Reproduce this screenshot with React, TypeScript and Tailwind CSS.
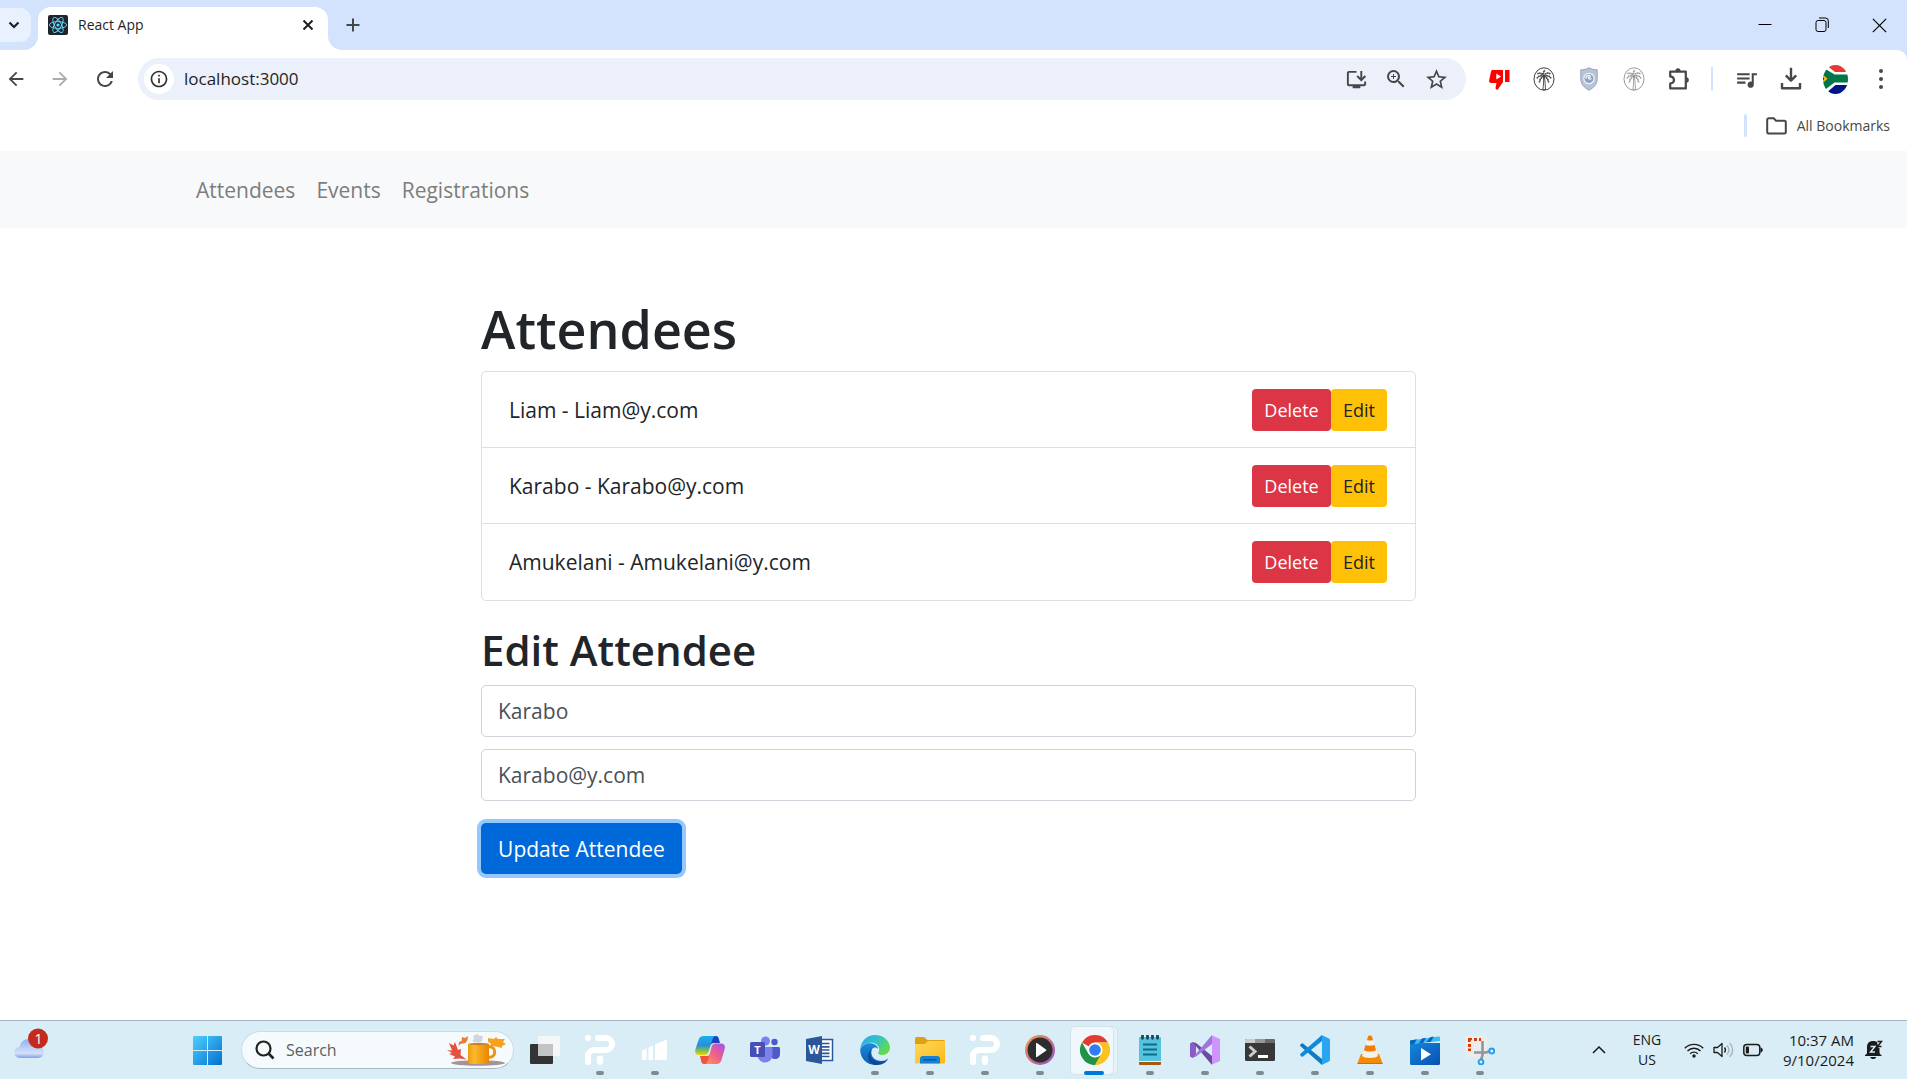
import React, { useState } from 'react';
import {
  MdArrowBack,
  MdArrowForward,
  MdRefresh,
  MdInfoOutline,
  MdOutlineInstallDesktop,
  MdZoomIn,
  MdStarBorder,
  MdQueueMusic,
} from 'react-icons/md';

type SvgProps = { children: React.ReactNode; box?: string; className?: string };

function Svg({ children, box = '0 0 30 30', className = 'size-[30px]' }: SvgProps) {
  return (
    <svg viewBox={box} className={className} fill="none" aria-hidden="true">
      {children}
    </svg>
  );
}

/* ---------- browser chrome ---------- */

function ReactFavicon() {
  return (
    <Svg box="0 0 20 20" className="size-[20px]">
      <rect width="20" height="20" rx="2" fill="#20232a" />
      <g stroke="#61dafb" strokeWidth="0.9">
        <ellipse cx="10" cy="10" rx="8.6" ry="3.4" />
        <ellipse cx="10" cy="10" rx="8.6" ry="3.4" transform="rotate(60 10 10)" />
        <ellipse cx="10" cy="10" rx="8.6" ry="3.4" transform="rotate(120 10 10)" />
      </g>
      <circle cx="10" cy="10" r="1.6" fill="#61dafb" />
    </Svg>
  );
}

function TabStrip() {
  return (
    <div className="flex h-[50px] items-end bg-[#d3e3fd]">
      <button
        aria-label="Search tabs"
        className="mb-2 flex h-[34px] w-[31px] items-center rounded-r-[11px] bg-[#e9f0fe] pl-2"
      >
        <Svg box="0 0 12 12" className="size-3">
          <path d="M1.5 3.5 6 8l4.500-4.500" stroke="#1f1f1f" strokeWidth="2.200" />
        </Svg>
      </button>
      <div className="relative ml-[7px] flex h-[43px] w-[290px] items-center rounded-t-[13px] bg-white pr-3 pl-[10px]">
        <Svg box="0 0 14 14" className="absolute bottom-0 -left-[14px] size-[14px]">
          <path d="M14 0v14H0A14 14 0 0 0 14 0Z" fill="#fff" />
        </Svg>
        <Svg box="0 0 14 14" className="absolute -right-[14px] bottom-0 size-[14px]">
          <path d="M0 0v14h14A14 14 0 0 1 0 0Z" fill="#fff" />
        </Svg>
        <div className="mb-[7px] flex flex-1 items-center">
          <ReactFavicon />
          <span className="ml-[10px] flex-1 text-[14px] leading-5 text-[#1f1f1f]">React App</span>
          <button aria-label="Close tab" className="flex size-4 items-center justify-center">
            <Svg box="0 0 12 12" className="size-3">
              <path d="m1.500 1.500 9 9m0-9-9 9" stroke="#1f1f1f" strokeWidth="2" />
            </Svg>
          </button>
        </div>
      </div>
      <button aria-label="New tab" className="mb-[17px] ml-[17px] flex size-4 items-center justify-center">
        <Svg box="0 0 14 14" className="size-[14px]">
          <path d="M7 .5v13M.5 7h13" stroke="#474747" strokeWidth="2" />
        </Svg>
      </button>
      <div className="mb-[17px] ml-auto flex items-center gap-[43px] pr-5">
        <button aria-label="Minimize">
          <Svg box="0 0 14 14" className="size-[14px]">
            <path d="M.5 6.500h13" stroke="#000" />
          </Svg>
        </button>
        <button aria-label="Restore">
          <Svg box="0 0 14 16" className="h-4 w-[14px]">
            <rect x="1" y="3.500" width="10" height="11" rx="2" stroke="#000" />
            <path d="M4 1h6.500A2.800 2.800 0 0 1 13.300 3.800V11" stroke="#000" />
          </Svg>
        </button>
        <button aria-label="Close">
          <Svg box="0 0 14 14" className="size-[15px]">
            <path d="m.8.8 12.400 12.400m0-12.400L.8 13.200" stroke="#000" strokeWidth="1.100" />
          </Svg>
        </button>
      </div>
    </div>
  );
}

function DislikeIcon() {
  return (
    <Svg box="0 0 21 21" className="size-[21px]">
      <path d="M3.500 1H14v12l-5.200 7.500c-1.200.6-2.600-.5-2.200-2L7.500 14H2C.8 14-.2 12.800.1 11.600L2 2.500C2.200 1.600 2.800 1 3.500 1Z" fill="#f00" />
      <rect x="16" y="1" width="4.500" height="12" fill="#f00" />
      <path d="M7.300 4.600v6L12 7.600Z" fill="#fff" />
    </Svg>
  );
}

function PalmIcon({ color }: { color: string }) {
  return (
    <Svg box="0 0 22 24" className="h-6 w-[22px]">
      <g stroke={color}>
        <ellipse cx="11" cy="12" rx="10" ry="11.200" strokeWidth="1" />
        <path d="M10.500 10c.3 4 0 8-.6 12.500h2.600c-.2-4-.5-8.500-1-12.500" strokeWidth=".9" />
        <path
          d="M11 9.500C9 6 6.500 5.500 4.500 7M11 9.500c-3-1.500-6-.5-7 2M11 9.500c-2.500.5-4.500 3-4.500 6M11 9.500c1.500-3.500 4-4.500 6.500-2.500M11 9.500c3-1.500 6-.5 7 2M11 9.500c2.500.5 4.500 3 4.500 6M11 9.500C10 6.500 10.500 4.500 12 3"
          strokeWidth="1.600"
          strokeDasharray="1.800 .4"
        />
      </g>
    </Svg>
  );
}

function ShieldIcon() {
  return (
    <Svg box="0 0 18 24" className="h-6 w-[18px]">
      <path d="M9 .8c2.500 1.500 5 2 8.200 2v9c0 5.500-3.500 9-8.200 11.400C4.300 20.800.8 17.300.8 11.800v-9c3.200 0 5.700-.5 8.200-2Z" fill="#b9c3d6" stroke="#98a3b8" />
      <circle cx="9" cy="11.500" r="5.200" fill="#8fa3c4" stroke="#eef2f8" strokeWidth="1.300" />
      <path d="M6 11.500c0-2 1.500-3 3-3s1.500 1.500 0 2 .5 2.500 2.500 1" stroke="#eef2f8" strokeWidth="1.500" />
    </Svg>
  );
}

function PuzzleIcon() {
  return (
    <Svg box="0 0 22 24" className="h-6 w-[22px]">
      <path
        d="M2.200 4.600h15.600v16.800H2.200v-4.800c2.400-.4 3.800-1.800 3.800-3.600s-1.400-3.200-3.800-3.600Z"
        stroke="#474747"
        strokeWidth="2.200"
        strokeLinejoin="round"
      />
      <path d="M7.500 4a2.500 2.800 0 0 1 5 0ZM18.500 10.200a2.300 2.800 0 0 1 0 5.600Z" fill="#474747" />
    </Svg>
  );
}

function FlagAvatar() {
  return (
    <Svg box="0 0 25 29" className="h-[29px] w-[25px]">
      <clipPath id="flag-clip">
        <ellipse cx="12.500" cy="14.500" rx="12.500" ry="14.500" />
      </clipPath>
      <g clipPath="url(#flag-clip)">
        <rect width="25" height="29" fill="#fff" />
        <path d="M3 0h22v7H12Z" fill="#e03c31" />
        <path d="M2 29h23v-9H12.500Z" fill="#001489" />
        <path d="M-1 2 11.500 9.500H25v8H11.500L-1 27Z" fill="#007749" />
        <path d="M-1 9 4.500 13.800-1 18.500Z" fill="#ffb81c" />
        <path d="M-1 11.500 1.300 13.800-1 16Z" fill="#000" />
      </g>
    </Svg>
  );
}

function Toolbar() {
  return (
    <div className="bg-[#d3e3fd]">
      <div className="flex h-[58px] items-center rounded-tr-[10px] bg-white pl-[5px]">
        <button aria-label="Back" className="text-[#474747]">
          <MdArrowBack size={22} />
        </button>
        <button aria-label="Forward" className="ml-[22px] text-[#ababab]">
          <MdArrowForward size={22} />
        </button>
        <button aria-label="Reload" className="ml-[22px] text-[#474747]">
          <MdRefresh size={24} />
        </button>
        <div className="ml-[21px] flex h-[42px] flex-1 items-center rounded-full bg-[#ebf0fa] px-[6px]">
          <button
            aria-label="Site information"
            className="flex size-[30px] items-center justify-center rounded-full bg-white text-[#303030]"
          >
            <MdInfoOutline size={20} />
          </button>
          <input
            aria-label="Address"
            defaultValue="localhost:3000"
            className="ml-[10px] min-w-0 flex-1 bg-transparent text-[17px] leading-6 text-[#1f1f1f] outline-none"
          />
          <div className="flex items-center gap-4 pr-[11px] text-[#474747]">
            <button aria-label="Install app">
              <MdOutlineInstallDesktop size={23} />
            </button>
            <button aria-label="Zoom">
              <MdZoomIn size={24} />
            </button>
            <button aria-label="Bookmark this tab">
              <MdStarBorder size={25} />
            </button>
          </div>
        </div>
        <div className="ml-[23px] flex items-center gap-[23px]">
          <button aria-label="Dislike counter"><DislikeIcon /></button>
          <button aria-label="Palm extension"><PalmIcon color="#3f3f3f" /></button>
          <button aria-label="Shield extension" className="mx-[2px]"><ShieldIcon /></button>
          <button aria-label="Second palm extension"><PalmIcon color="#9a9a9a" /></button>
          <button aria-label="Extensions"><PuzzleIcon /></button>
        </div>
        <div className="mr-[21px] ml-[21px] h-6 w-[2px] bg-[#d3e3fd]" />
        <div className="flex items-center gap-[21px] pr-[14px] text-[#474747]">
          <button aria-label="Media"><MdQueueMusic size={25} /></button>
          <button aria-label="Downloads">
            <Svg box="0 0 22 24" className="h-6 w-[22px]">
              <path d="M11 .8v12.500M5.800 8.400l5.200 5.200 5.200-5.200M2 16v5.200h18V16" stroke="#474747" strokeWidth="2.400" strokeLinejoin="round" />
            </Svg>
          </button>
          <button aria-label="Profile"><FlagAvatar /></button>
          <button aria-label="Menu" className="flex w-6 justify-center">
            <Svg box="0 0 6 22" className="h-[22px] w-[6px]">
              <circle cx="3" cy="3" r="2" fill="#474747" />
              <circle cx="3" cy="11" r="2" fill="#474747" />
              <circle cx="3" cy="19" r="2" fill="#474747" />
            </Svg>
          </button>
        </div>
      </div>
    </div>
  );
}

function BookmarksBar() {
  return (
    <div className="flex h-[43px] items-center justify-end bg-white pr-[17px] pb-2">
      <div className="h-[23px] w-[3px] rounded bg-[#d3e3fd]" />
      <button className="ml-[19px] flex items-center gap-[10px] text-[14px] leading-5 text-[#474747]">
        <Svg box="0 0 21 18" className="h-[18px] w-[21px]">
          <path d="M1.200 14.800V3a1.500 1.500 0 0 1 1.500-1.700h5l2.300 2.400h8.300a1.500 1.500 0 0 1 1.500 1.500v9.800a1.500 1.500 0 0 1-1.500 1.500H2.700a1.500 1.500 0 0 1-1.500-1.700Z" stroke="#474747" strokeWidth="2" />
        </Svg>
        All Bookmarks
      </button>
    </div>
  );
}

/* ---------- web page ---------- */

const attendees = [
  { name: 'Liam', email: 'Liam@y.com' },
  { name: 'Karabo', email: 'Karabo@y.com' },
  { name: 'Amukelani', email: 'Amukelani@y.com' },
];

function Page() {
  const [name, setName] = useState('Karabo');
  const [email, setEmail] = useState('Karabo@y.com');
  const field =
    'block h-[52px] w-full rounded-[5px] border border-[#ced4da] bg-white px-4 text-[21px] leading-8 text-[#495057] outline-none';
  return (
    <div className="flex-1 bg-white text-[#212529]">
      <nav className="flex h-[77px] items-center gap-[21px] bg-[#f8f9fa] pl-[196px] text-[21px] leading-8 text-[#7c7d7d]">
        <a href="#attendees">Attendees</a>
        <a href="#events">Events</a>
        <a href="#registrations">Registrations</a>
      </nav>
      <main className="pt-[68px] pr-[10px]">
        <div className="mx-auto max-w-[935px]">
          <h1 className="mb-[9px] text-[52px] leading-[66px] font-semibold">Attendees</h1>
          <ul className="divide-y divide-[#dfdfdf] rounded-[5px] border border-[#dfdfdf]">
            {attendees.map((a) => (
              <li key={a.name} className="flex h-[76px] items-center justify-between pr-7 pl-[27px]">
                <span className="text-[21px] leading-8">
                  {a.name} - {a.email}
                </span>
                <span className="flex text-[18px] leading-7">
                  <button className="h-[42px] w-[79px] rounded-[4px] bg-[#dc3545] text-white">Delete</button>
                  <button className="h-[42px] w-[56px] rounded-[4px] bg-[#ffc107]">Edit</button>
                </span>
              </li>
            ))}
          </ul>
          <h2 className="mt-[22px] mb-[9px] text-[42px] leading-[53px] font-semibold">Edit Attendee</h2>
          <form onSubmit={(e) => e.preventDefault()}>
            <input aria-label="Name" className={field} value={name} onChange={(e) => setName(e.target.value)} />
            <input
              aria-label="Email"
              className={field + ' mt-3'}
              value={email}
              onChange={(e) => setEmail(e.target.value)}
            />
            <button className="mt-[22px] block h-[51px] w-[201px] rounded-[5px] bg-[#0069d9] text-[21px] leading-8 text-white ring-4 ring-[#95c8ff]">
              Update Attendee
            </button>
          </form>
        </div>
      </main>
    </div>
  );
}

/* ---------- taskbar ---------- */

function Weather() {
  return (
    <Svg box="0 0 36 32" className="h-8 w-9">
      <defs>
        <linearGradient id="cloud" x1="0" y1="0" x2="0" y2="1">
          <stop stopColor="#8fb2ee" />
          <stop offset=".75" stopColor="#d5e0fb" />
          <stop offset="1" stopColor="#7fa0f0" />
        </linearGradient>
      </defs>
      <path d="M6 30a5.500 5.500 0 0 1-.5-11c1-5 4.500-8 9-8s8 3 8.500 7c4 0 7 2.500 7 6a6 6 0 0 1-6 6Z" fill="url(#cloud)" />
      <circle cx="24" cy="10.500" r="10" fill="#c42b1c" />
      <text x="24.500" y="15.500" fill="#fff" fontSize="14" textAnchor="middle">1</text>
    </Svg>
  );
}

function WindowsLogo() {
  return (
    <Svg box="0 0 29 29" className="size-[29px]">
      <defs>
        <linearGradient id="win" x1="0" y1="0" x2="1" y2="1">
          <stop stopColor="#4fd0fb" />
          <stop offset="1" stopColor="#0070d2" />
        </linearGradient>
      </defs>
      <path d="M1 0h13v14H0V1a1 1 0 0 1 1-1Zm14 0h13a1 1 0 0 1 1 1v13H15ZM0 15h14v14H1a1 1 0 0 1-1-1Zm15 0h14v13a1 1 0 0 1-1 1H15Z" fill="url(#win)" />
    </Svg>
  );
}

function AutumnMug() {
  return (
    <Svg box="0 0 59 34" className="h-[34px] w-[59px]">
      <defs>
        <linearGradient id="mug" x1="0" x2="1">
          <stop stopColor="#f29a0e" />
          <stop offset=".3" stopColor="#fcb92b" />
          <stop offset="1" stopColor="#e88400" />
        </linearGradient>
      </defs>
      <ellipse cx="31" cy="30" rx="27" ry="2.800" fill="#a39498" />
      <path d="m0 17 5 .5L2 10l4.500 2.500L8 9l3 8 3-1-.5 6 6 4.500-6.500-1-7 .5 2-2.500L2 21l3-1Z" fill="#e8503e" />
      <path d="m12 9 2.500-1L15 4l3 1 3-2-.5 4-2 3-5 1-2 2Z" fill="#ee7b35" />
      <path d="m41 5 6 1 2-2 2 2 7 0-2 3 3 2-4 2 0 2-4-1-5-1-3 .5 1-3-3-1.500Z" fill="#f8a11c" />
      <path d="M26 9c-1-3 3-3 0-5 3-4 6-3 6-1 3-1 5 1 3 3 1 1 0 2-1 3Z" fill="#bfc5ca" opacity=".7" />
      <path d="M41 14c9-2 9 12 0 10" stroke="#ee9310" strokeWidth="3" />
      <path d="M21 11h21v17c0 2-1 3-3 3H24c-2 0-3-1-3-3Z" fill="url(#mug)" />
      <ellipse cx="31.500" cy="11" rx="10.500" ry="1.200" fill="#c9822a" />
    </Svg>
  );
}

const TaskView = () => (
  <Svg>
    <rect x="0" y="9" width="23" height="20" rx="1" fill="#333" />
    <rect x="8" y="1" width="22" height="20" rx="1" fill="#f6f6f6" opacity=".92" />
    <rect x="8" y="9" width="15" height="12" fill="#c1c3c4" />
  </Svg>
);
const IPilot = () => (
  <Svg>
    <circle cx="3" cy="3" r="3" fill="#fff" />
    <path d="M13 3h8a6 6 0 0 1 0 12H9a6 6 0 0 0-6 6v6" stroke="#fff" strokeWidth="6" strokeLinecap="round" />
    <path d="M15 23.500V27" stroke="#fff" strokeWidth="6" strokeLinecap="round" />
  </Svg>
);
const Bars = () => (
  <Svg>
    <path
      d="M2 15.500 6.500 13.500V25h-3A1.500 1.500 0 0 1 2 23.500ZM8.500 12.500 13 10.500V25H8.500ZM15 9.500l4-2V25h-4ZM18 8l8-3h1v18.500a1.500 1.500 0 0 1-1.500 1.500H18Z"
      fill="#fff"
    />
  </Svg>
);
const Copilot = () => (
  <Svg>
    <defs>
      <linearGradient id="cp1" x1="0" y1="0" x2="0" y2="1">
        <stop stopColor="#19b0f0" />
        <stop offset=".5" stopColor="#2b8fd8" />
        <stop offset=".75" stopColor="#74c155" />
        <stop offset="1" stopColor="#f3d400" />
      </linearGradient>
      <linearGradient id="cp2" x1="1" y1="0" x2="0" y2="1">
        <stop stopColor="#a14ef0" />
        <stop offset=".5" stopColor="#f0608c" />
        <stop offset="1" stopColor="#ff9a4a" />
      </linearGradient>
    </defs>
    <path d="M16 1h5c2 0 2.500 1.500 3 3.500L25 8h-6c-2 0-3 1-3.500 3Z" fill="#1846c0" />
    <path d="M14 29H9c-2 0-2.500-1.500-3-3.500L5 21h7c2 0 3-1 3.500-3Z" fill="#f0543c" />
    <path d="M8.500 1H21c-2 0-3 1.500-3.500 3.500L13.500 17c-.6 2-2 3-4 3H4c-3.500 0-4.500-2.500-3.500-6L3.500 5C4.300 2.500 6 1 8.500 1Z" fill="url(#cp1)" />
    <path d="M21.500 29H9.500c2 0 3-1.500 3.500-3.500L16.500 12c.6-2 2-3.500 4-3.500H26c3.500 0 4.500 2.500 3.500 6L26.500 25c-.8 2.500-2.500 4-5 4Z" fill="url(#cp2)" />
  </Svg>
);
const Teams = () => (
  <Svg>
    <circle cx="24.500" cy="7" r="3.200" fill="#5059c9" />
    <circle cx="15.500" cy="6" r="4.500" fill="#7b83eb" />
    <path d="M20 12h8.500c.8 0 1.500.7 1.500 1.500V19c0 3-2 5-5 5s-5-2-5-4Z" fill="#5059c9" />
    <path d="M8 12h13c.8 0 1.500.7 1.500 1.500V20a7.500 7.500 0 0 1-15 0Z" fill="#7b83eb" />
    <rect x="0" y="7" width="15" height="15" rx="1.500" fill="#464eb8" />
    <text x="7.500" y="18.500" fill="#fff" fontSize="11" fontWeight="700" textAnchor="middle">T</text>
  </Svg>
);
const Word = () => (
  <Svg>
    <rect x="14" y="4.500" width="13.500" height="21" fill="#fff" stroke="#2b579a" strokeWidth="1.500" />
    <path d="M16 8.500h8.500M16 11.800h8.500M16 15h8.500M16 18.300h8.500M16 21.500h8.500" stroke="#2b579a" strokeWidth="1.700" />
    <path d="M1 4 17 1v28L1 26Z" fill="#2b579a" />
    <text x="9" y="19" fill="#fff" fontSize="12" fontWeight="700" textAnchor="middle">W</text>
  </Svg>
);
const Edge = () => (
  <Svg>
    <defs>
      <linearGradient id="ed1" x1="0" y1="0" x2="1" y2=".5">
        <stop stopColor="#2aa7e8" />
        <stop offset=".55" stopColor="#35c1c8" />
        <stop offset="1" stopColor="#62d94e" />
      </linearGradient>
      <linearGradient id="ed2" x1="0" y1="0" x2="0" y2="1">
        <stop stopColor="#1a8ae0" />
        <stop offset="1" stopColor="#0b5cb4" />
      </linearGradient>
    </defs>
    <path d="M.3 14C1 6 7 0 15 0c9 0 15 6.500 15 12.500 0 4.500-3.500 7.500-7.500 7.500-3 0-5-1.200-4-2.500 1.500-2 1-8-5-9.500C8 6.800 2.500 9 .3 14Z" fill="url(#ed1)" />
    <path d="M.3 14C2.500 9 8 7.500 12 8.500c3.500.8 6 3 6 5.500-3-3-6-1-6.500 2C10.500 22 16 27.500 25 25.500 22 29 18.500 30 15 30 6 30-.5 22 .3 14Z" fill="url(#ed2)" />
    <path d="M12 14c-3.500 4-1.500 11 5 12.500 4.500 1 8.500-.5 11-3-1 3-5 6.500-11 6.500C8 30 5 19 12 14Z" fill="#0c4a94" />
  </Svg>
);
const Folder = () => (
  <Svg>
    <defs>
      <linearGradient id="fold" x1="0" y1="0" x2="1" y2="1">
        <stop stopColor="#ffd95c" />
        <stop offset="1" stopColor="#fbb814" />
      </linearGradient>
    </defs>
    <path d="M0 3.500A1.500 1.500 0 0 1 1.500 2H9l3.500 3H29a1 1 0 0 1 1 1v6H0Z" fill="#e0a010" />
    <path d="M0 9h9.500L13 6h17v21.500a1 1 0 0 1-1 1H1a1 1 0 0 1-1-1Z" fill="url(#fold)" />
    <path d="M5 28.500V24a3 3 0 0 1 3-3h14a3 3 0 0 1 3 3v4.500Z" fill="#1581d2" />
    <path d="M8.500 24.800h13" stroke="#0b4f8c" strokeWidth="1.200" />
  </Svg>
);
const MediaPlayer = () => (
  <Svg>
    <defs>
      <linearGradient id="mp" x1="0" y1="0" x2="1" y2="1">
        <stop stopColor="#ff9a3c" />
        <stop offset="1" stopColor="#8d4fd0" />
      </linearGradient>
    </defs>
    <circle cx="15" cy="15" r="15" fill="url(#mp)" />
    <circle cx="15" cy="15" r="12.500" fill="#2d2d2d" />
    <path d="M11 8.500v13c0 .6.600.8 1 .5l9-6.300c.5-.3.5-1 0-1.300l-9-6.400c-.4-.3-1 0-1 .5Z" fill="#fff" />
  </Svg>
);
const Chrome = () => (
  <Svg>
    <path d="M15 15 2 7.500A15 15 0 0 1 28 7.500H15Z" fill="#e33b2e" />
    <path d="M15 15v-7.500h13A15 15 0 0 1 15 30l6.500-11.300Z" fill="#fcc31e" />
    <path d="M2 7.500 8.500 18.700 15 22.500l2-.3L15 30A15 15 0 0 1 2 7.500Z" fill="#219344" />
    <path d="m15 30 6.500-11.300L15 22.500 12 29.600Z" fill="#219344" />
    <path d="M15 30 21.500 18.700H26L17 30Z" fill="#fcc31e" />
    <circle cx="15" cy="15" r="7.500" fill="#fff" />
    <circle cx="15" cy="15" r="5.800" fill="#2f7df0" />
  </Svg>
);
const Notepad = () => (
  <Svg>
    <rect x="4" y="25" width="22" height="5" rx="1" fill="#a85712" />
    <rect x="4" y="24" width="22" height="3" fill="#f4f4f4" />
    <path d="M4 3a1 1 0 0 1 1-1h20a1 1 0 0 1 1 1v23H4Z" fill="#55c2de" />
    <path d="M8 9.500h14M8 14.500h14M8 19.500h14" stroke="#0d6c88" strokeWidth="2" />
    <path d="M7.500.8v2.500m5-2.500v2.500m5-2.500v2.500m5-2.500v2.500" stroke="#124b5e" strokeWidth="2.800" strokeLinecap="round" />
  </Svg>
);
const VisualStudio = () => (
  <Svg>
    <path d="M0 8.500 2.500 7 6 9.500v11L2.500 23 0 21.500Z" fill="#8a5cc4" />
    <path d="M2.500 7 6 8l16 13v9l-3.500-4Z" fill="#6c4aa3" />
    <path d="M2.500 23 22 0v9L6 21.500Z" fill="#a074dc" />
    <path d="M21 0l9 4v22l-9 4c1-.5 1-1.500 1-2V2c0-.8 0-1.500-1-2Z" fill="#cf94fb" />
  </Svg>
);
const Terminal = () => (
  <Svg>
    <rect y="4" width="30" height="22" rx="1.500" fill="#383838" />
    <path d="M0 8V5.500A1.500 1.500 0 0 1 1.500 4H10v4Z" fill="#ccc" />
    <path d="M10 4h10v4H10Z" fill="#999" />
    <path d="M20 4h8.500A1.500 1.500 0 0 1 30 5.500V8H20Z" fill="#6b6b6b" />
    <path d="m4.500 11.500 5.500 5-5.500 5" stroke="#ccc" strokeWidth="3" />
    <path d="M13 21.500h10" stroke="#fff" strokeWidth="3" />
  </Svg>
);
const VSCode = () => (
  <Svg>
    <path d="M1.500 8.500a1.200 1.200 0 0 1 1.500 0L22 24v6L.5 11.300a1.300 1.300 0 0 1 0-1.800Z" fill="#0f79c4" />
    <path d="M1.500 21.500a1.200 1.200 0 0 0 1.500 0L22 6V0L.5 18.700a1.300 1.300 0 0 0 0 1.800Z" fill="#0d8bda" />
    <path d="M20.500.3a1.800 1.800 0 0 1 1.600 0L29 3.500c.6.300 1 1 1 1.700v19.600c0 .7-.4 1.400-1 1.700l-6.900 3.200a1.800 1.800 0 0 1-1.600 0c.9.400 1.500-.2 1.500-1V1.500c0-.8-.6-1.500-1.500-1.200Z" fill="#2aa5f2" />
  </Svg>
);
const Vlc = () => (
  <Svg>
    <path d="M6 19h18l3.500 9a.8.800 0 0 1-.8 1H3.300a.8.800 0 0 1-.8-1Z" fill="#f58a07" />
    <path d="M13 1.500c.5-1.200 3.500-1.200 4 0L23 21c-2 2.500-14 2.500-16 0Z" fill="#f2f2f2" />
    <path d="M13 1.500c.5-1.200 3.500-1.200 4 0l1 3.500c-1 .8-5 .8-6 0ZM10.600 9.800c2 1.200 6.800 1.200 8.800 0l1.700 5.500c-2.500 1.700-9.700 1.700-12.200 0Z" fill="#f47d05" />
    <path d="M2.500 28h25v1h-25Z" fill="#d96a00" />
  </Svg>
);
const Movies = () => (
  <Svg>
    <defs>
      <linearGradient id="mv" x1="0" y1="0" x2="1" y2="1">
        <stop stopColor="#1587dc" />
        <stop offset="1" stopColor="#0a4fb0" />
      </linearGradient>
    </defs>
    <path d="M0 5.500 28.500 1.500c1-.1 1.500.5 1.500 1.500v3L0 9.500Z" fill="#37bdf5" />
    <path d="M0 5.500 7 4.300 3.500 10H0ZM12 3.500l4-.7L12.500 9h-4ZM20 2.200l4-.6L20.500 7h-4Z" fill="#0d62bd" />
    <path d="M0 9.500 10 8h20v20.500a1.500 1.500 0 0 1-1.500 1.500h-27A1.500 1.500 0 0 1 0 28.500Z" fill="url(#mv)" />
    <path d="M11 13v12.500l10-6.200Z" fill="#fff" />
  </Svg>
);
const Snip = () => (
  <Svg>
    <rect width="22" height="22" rx="3" fill="#ececec" />
    <path d="M3 3h4v1.500L5.500 6v1H3ZM9 3h3v3H9ZM14 3h2v3h-2ZM3 9h3v3H3ZM3 13.500h3V16H3Z" fill="#d83b01" />
    <path d="M17.500 6v14l-1.500 5" stroke="#8f979c" strokeWidth="2.600" />
    <path d="M9 17.500h12l3-1" stroke="#8f979c" strokeWidth="2.600" />
    <circle cx="26.800" cy="16" r="2.500" stroke="#20a0ea" strokeWidth="1.900" />
    <circle cx="16" cy="27" r="2.400" stroke="#20a0ea" strokeWidth="1.900" />
  </Svg>
);

type App = { name: string; icon: () => React.JSX.Element; state?: 'open' | 'active' };

const apps: App[] = [
  { name: 'Task View', icon: TaskView },
  { name: 'iPilot', icon: IPilot, state: 'open' },
  { name: 'Monitor', icon: Bars, state: 'open' },
  { name: 'Copilot', icon: Copilot },
  { name: 'Teams', icon: Teams },
  { name: 'Word', icon: Word },
  { name: 'Edge', icon: Edge, state: 'open' },
  { name: 'File Explorer', icon: Folder, state: 'open' },
  { name: 'iPilot window', icon: IPilot, state: 'open' },
  { name: 'Media Player', icon: MediaPlayer, state: 'open' },
  { name: 'Chrome', icon: Chrome, state: 'active' },
  { name: 'Notepad', icon: Notepad, state: 'open' },
  { name: 'Visual Studio', icon: VisualStudio, state: 'open' },
  { name: 'Terminal', icon: Terminal, state: 'open' },
  { name: 'Visual Studio Code', icon: VSCode, state: 'open' },
  { name: 'VLC', icon: Vlc, state: 'open' },
  { name: 'Movies', icon: Movies, state: 'open' },
  { name: 'Snipping Tool', icon: Snip, state: 'open' },
];

function Taskbar() {
  return (
    <footer className="flex h-[59px] items-center border-t border-[#a7b6c0] bg-[#d9edf7] text-[#1b1b1b]">
      <button aria-label="Weather" className="mb-3 ml-[14px]"><Weather /></button>
      <button aria-label="Start" className="ml-[143px]"><WindowsLogo /></button>
      <label className="ml-[19px] flex h-[38px] w-[273px] items-center rounded-full border border-[#c9dbe4] border-b-[#a9b9c2] bg-[#f5fafd] pr-[7px] pl-[13px]">
        <Svg box="0 0 20 20" className="size-5">
          <circle cx="8.500" cy="8.500" r="7" stroke="#222" strokeWidth="2.200" />
          <path d="m13.500 13.500 5 5" stroke="#222" strokeWidth="2.600" />
        </Svg>
        <input
          aria-label="Search"
          placeholder="Search"
          className="ml-[11px] min-w-0 flex-1 bg-transparent text-[16px] leading-6 outline-none placeholder:text-[#5c5f61]"
        />
        <AutumnMug />
      </label>
      <div className="ml-[3px] flex h-full">
        {apps.map(({ name, icon: Icon, state }) => (
          <button key={name} aria-label={name} className="relative flex w-[55px] items-center justify-center">
            {state === 'active' && (
              <>
                <span className="absolute top-[5px] left-[10px] h-[49px] w-[41px] rounded-[5px] border border-[#d3e3ec] bg-[#e4f2fa]" />
                <span className="absolute top-[5px] left-[3px] h-[49px] w-[44px] rounded-[5px] border border-[#d3e3ec] bg-[#eff7fc]" />
                <span className="absolute bottom-1 left-[17px] h-1 w-5 rounded-full bg-[#0078d4]" />
              </>
            )}
            {state === 'open' && (
              <span className="absolute bottom-1 left-6 h-1 w-2 rounded-full bg-[#7f8a90]" />
            )}
            <span className="relative"><Icon /></span>
          </button>
        ))}
      </div>
      <div className="ml-auto flex items-center pr-[24px]">
        <button aria-label="Show hidden icons">
          <Svg box="0 0 14 8" className="h-2 w-[14px]">
            <path d="m1 7 6-6 6 6" stroke="#1b1b1b" strokeWidth="1.500" />
          </Svg>
        </button>
        <button className="ml-[26px] w-[30px] text-center text-[14px] leading-5">
          ENG
          <br />
          US
        </button>
        <span className="ml-[22px] flex items-center gap-[9px]">
          <Svg box="0 0 20 16" className="h-4 w-5">
            <g stroke="#1b1b1b" strokeWidth="1.400">
              <path d="M.8 6.200a13 13 0 0 1 18.400 0" />
              <path d="M3.500 9a9 9 0 0 1 13 0" />
              <path d="M6.200 11.700a5.400 5.400 0 0 1 7.600 0" />
            </g>
            <circle cx="10" cy="14" r="1.700" fill="#1b1b1b" />
          </Svg>
          <Svg box="0 0 21 16" className="h-4 w-[21px]">
            <path d="M1 5.500h3.500L9 1.500v13l-4.500-4H1Z" stroke="#1b1b1b" strokeWidth="1.300" strokeLinejoin="round" />
            <path d="M11.500 5.500c1.200 1.500 1.200 3.500 0 5" stroke="#1b1b1b" strokeWidth="1.300" />
            <path d="M14 3.500c2.500 2.800 2.500 6.200 0 9M16.800 1.200c3.600 4.300 3.600 9.300 0 13.600" stroke="#a4b2ba" strokeWidth="1.300" />
          </Svg>
          <Svg box="0 0 20 14" className="h-[14px] w-5">
            <rect x=".8" y="1.500" width="16" height="11" rx="3" stroke="#1b1b1b" strokeWidth="1.500" />
            <rect x="2.800" y="3.500" width="3.200" height="7" rx="1" fill="#1b1b1b" />
            <path d="M17.500 4.500c3 .5 3 4.500 0 5Z" fill="#1b1b1b" />
          </Svg>
        </span>
        <button className="ml-5 text-right text-[15px] leading-5">
          10:37 AM
          <br />
          9/10/2024
        </button>
        <button aria-label="Notifications" className="ml-[11px]">
          <Svg box="0 0 18 20" className="h-5 w-[18px]">
            <path d="M0 15c1.500-.5 2-1.500 2-3V7c0-4 2.500-6 6-6 4 0 6.500 2 6.500 6v5c0 1.500.5 2.500 2 3v1H0Z" fill="#1b1b1b" />
            <path d="M5.200 17h6c-.5 2.700-5.500 2.700-6 0Z" fill="#1b1b1b" />
            <path d="M5.500 6.500h4.500l-4.500 5.500h4.500" stroke="#d9edf7" strokeWidth="1.400" />
            <path d="M11.500 0H18v8h-4.500Z" fill="#d9edf7" />
            <path d="M12.500 1.500h4l-4 5h4" stroke="#1b1b1b" strokeWidth="1.500" />
          </Svg>
        </button>
      </div>
    </footer>
  );
}

export default function App() {
  return (
    <div className="flex min-h-screen flex-col font-['Open_Sans','Noto_Sans',sans-serif]">
      <header>
        <TabStrip />
        <Toolbar />
        <BookmarksBar />
      </header>
      <Page />
      <Taskbar />
    </div>
  );
}
